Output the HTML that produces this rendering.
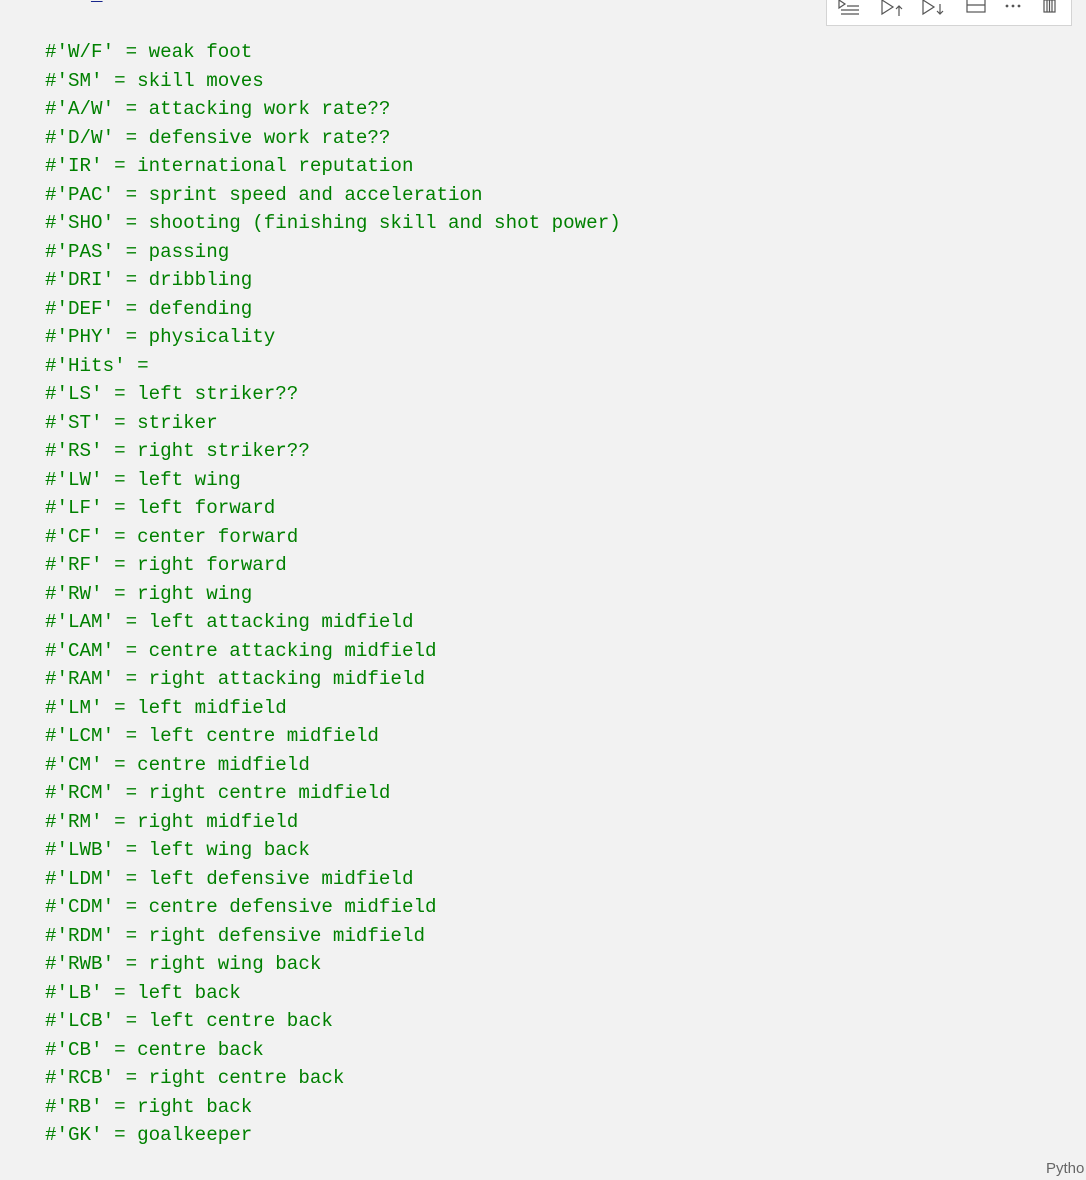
<!DOCTYPE html>
<html><head><meta charset="utf-8"><style>
html,body{margin:0;padding:0;background:#f2f2f2;width:1086px;height:1180px;overflow:hidden;position:relative}
pre{position:absolute;left:45px;top:-19px;margin:0;font-family:"Liberation Mono",monospace;font-size:19.2px;line-height:28.5px;color:#008000}
.b{color:#001080}
.tb{position:absolute;left:826px;top:-2px;width:244px;height:27px;background:#fff;border:1px solid #d4d4d4;border-top:none}
.tb svg{position:absolute;top:0}
.py{position:absolute;left:1046px;top:1160px;font-family:"Liberation Sans",sans-serif;font-size:15px;color:#666}
</style></head><body>
<pre><span class="b">data_desc</span>

#'W/F' = weak foot
#'SM' = skill moves
#'A/W' = attacking work rate??
#'D/W' = defensive work rate??
#'IR' = international reputation
#'PAC' = sprint speed and acceleration
#'SHO' = shooting (finishing skill and shot power)
#'PAS' = passing
#'DRI' = dribbling
#'DEF' = defending
#'PHY' = physicality
#'Hits' =
#'LS' = left striker??
#'ST' = striker
#'RS' = right striker??
#'LW' = left wing
#'LF' = left forward
#'CF' = center forward
#'RF' = right forward
#'RW' = right wing
#'LAM' = left attacking midfield
#'CAM' = centre attacking midfield
#'RAM' = right attacking midfield
#'LM' = left midfield
#'LCM' = left centre midfield
#'CM' = centre midfield
#'RCM' = right centre midfield
#'RM' = right midfield
#'LWB' = left wing back
#'LDM' = left defensive midfield
#'CDM' = centre defensive midfield
#'RDM' = right defensive midfield
#'RWB' = right wing back
#'LB' = left back
#'LCB' = left centre back
#'CB' = centre back
#'RCB' = right centre back
#'RB' = right back
#'GK' = goalkeeper</pre>
<div class="tb">
<svg width="244" height="20" viewBox="0 0 244 20" fill="none" stroke="#555" stroke-width="1.2">
<path d="M12 2 L18 6 L12 10 Z"/><path d="M20 8 H32 M14 12 H32 M14 16 H32"/>
<path d="M55 2 V16 L66 9 Z"/><path d="M72 8 V18 M69 11 L72 8 L75 11"/>
<path d="M96 2 V16 L107 9 Z"/><path d="M113 6 V16 M110 13 L113 16 L116 13"/>
<rect x="140" y="1" width="18" height="13"/><path d="M140 7 H158"/>
<circle cx="180" cy="8" r=".8" fill="#555"/><circle cx="186" cy="8" r=".8" fill="#555"/><circle cx="192" cy="8" r=".8" fill="#555"/>
<rect x="217" y="2" width="11" height="12"/><path d="M220 2 V14 M222.5 2 V14 M225 2 V14"/>
</svg>
</div>
<div class="py">Pytho</div>
</body></html>
